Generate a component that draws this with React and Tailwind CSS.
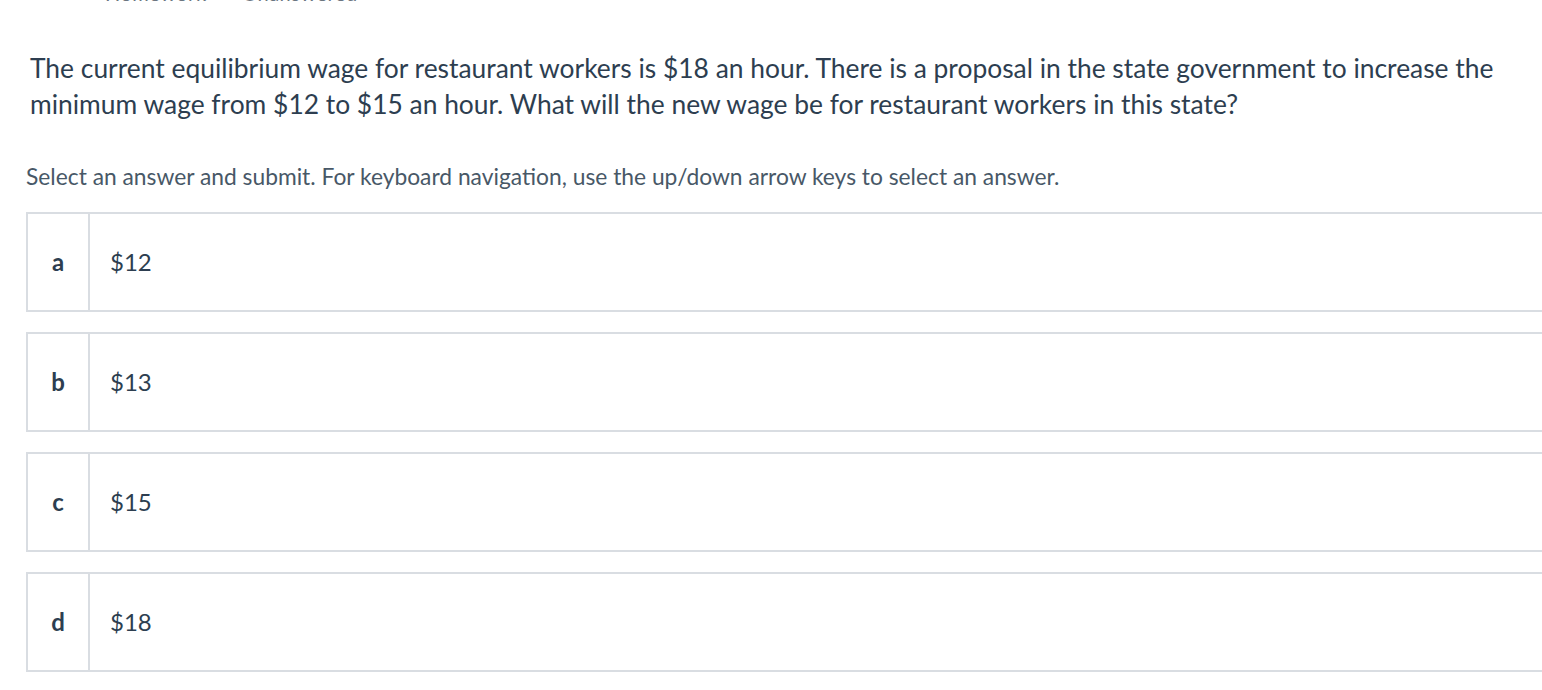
import React from 'react';

const answers = [
    { key: 'a', label: '$12' },
    { key: 'b', label: '$13' },
    { key: 'c', label: '$15' },
    { key: 'd', label: '$18' },
];

const AnswerRow = ({ letter, label }) => (
    <div className="flex h-[100px] w-[1540px] border-2 border-[#d9dde2] bg-white">
        <div className="flex w-[62px] shrink-0 items-center justify-center border-r-2 border-[#d9dde2] text-[24px] font-bold text-[#2d3e50]">
            {letter}
        </div>
        <div className="flex items-center pl-[20px] text-[24px] text-[#2d3e50]">{label}</div>
    </div>
);

const App = () => {
    return (
        <div className="h-[690px] w-full overflow-hidden bg-white font-['Lato','Noto_Sans',sans-serif]">
            <div className="relative">
                <div className="flex gap-[36px] pl-[105px] -mt-[17px] h-[20px] text-[20px] leading-[20px] tracking-[0.5px] text-[#6b7580]">
                    <span>Homework</span>
                    <span>Unanswered</span>
                </div>
                <div className="absolute right-[-20px] top-[-30px] h-[32px] w-[60px] rounded bg-white shadow-md" />
            </div>
            <div className="pl-[30px] pt-[47px] pr-[20px] text-[26.4px] leading-[36px] text-[#2d3e50]">
                The current equilibrium wage for restaurant workers is $18 an hour. There is a proposal in the state government to increase the minimum wage from $12 to $15 an hour. What will the new wage be for restaurant workers in this state?
            </div>
            <p className="mt-[40px] pl-[26px] text-[22.8px] leading-[28px] text-[#485867]">
                Select an answer and submit. For keyboard navigation, use the up/down arrow keys to select an answer.
            </p>
            <div className="mt-[22px] ml-[26px] flex flex-col gap-[20px]">
                {answers.map((a) => (
                    <AnswerRow key={a.key} letter={a.key} label={a.label} />
                ))}
            </div>
        </div>
    );
};

export default App;
